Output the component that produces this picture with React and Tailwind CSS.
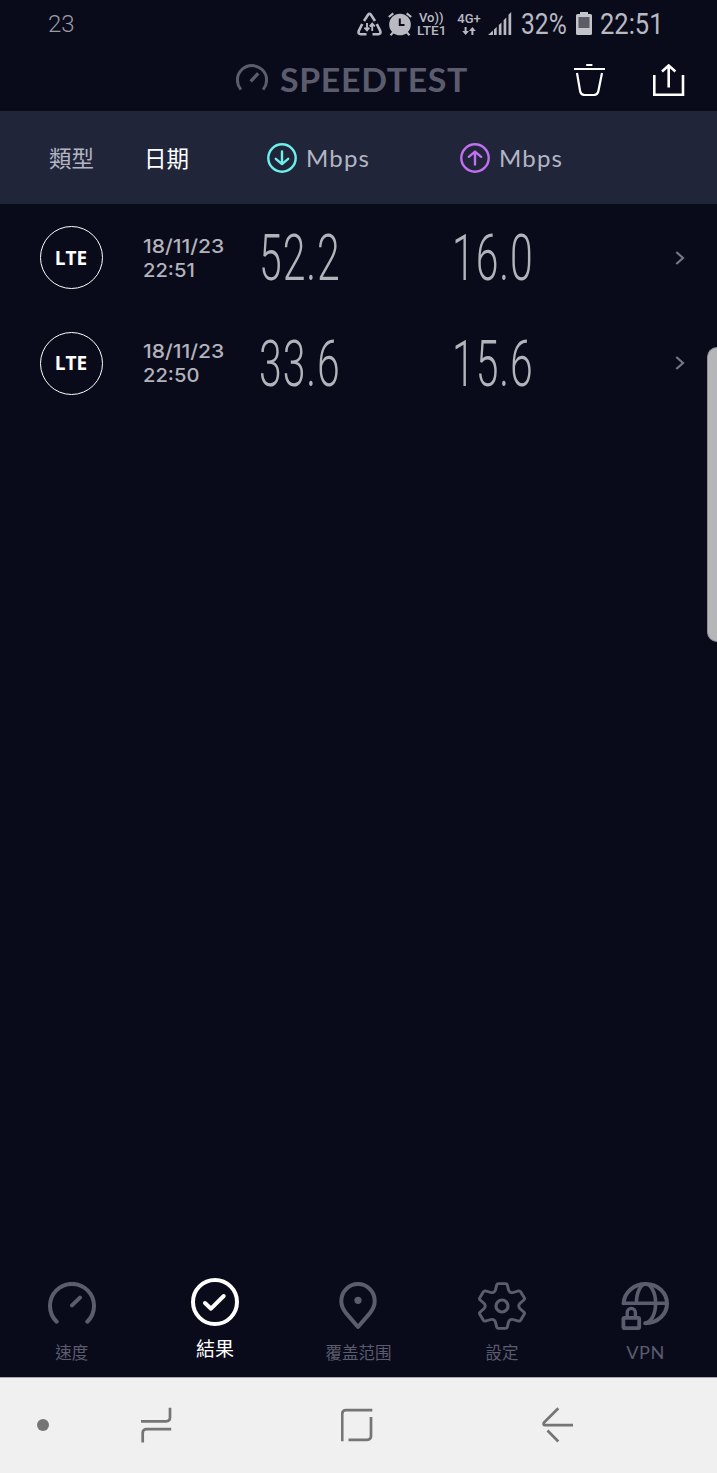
import React from 'react';
import clsx from 'clsx';

const results = [
  { id: 1, type: 'LTE', date: '18/11/23', time: '22:51', download: '52.2', upload: '16.0' },
  { id: 2, type: 'LTE', date: '18/11/23', time: '22:50', download: '33.6', upload: '15.6' },
];

const tabs = [
  { id: 'speed', label: '速度', Icon: GaugeIcon },
  { id: 'results', label: '結果', Icon: CheckIcon, active: true },
  { id: 'coverage', label: '覆盖范围', Icon: PinIcon },
  { id: 'settings', label: '設定', Icon: GearIcon },
  { id: 'vpn', label: 'VPN', Icon: VpnIcon },
];

function GaugeIcon() {
  return (
    <svg className="size-12" viewBox="0 0 48 48" fill="none" stroke="currentColor" strokeWidth="4" strokeLinecap="round">
      <path d="M8.7 39.7A22 22 0 1 1 39.3 39.7M24 23.4L32 15.6" />
    </svg>
  );
}

function CheckIcon() {
  return (
    <svg className="size-12" viewBox="0 0 48 48" fill="none" stroke="currentColor" strokeWidth="4">
      <circle cx="24" cy="24" r="22" />
      <path d="M14 25L20 30.7L32.7 18" strokeLinecap="round" strokeLinejoin="round" />
    </svg>
  );
}

function PinIcon() {
  return (
    <svg className="size-12" viewBox="0 0 48 48" fill="none" stroke="currentColor" strokeWidth="4">
      <path d="M24 2A16.7 17 0 0 0 7.3 19.3C7.3 24.6 9.6 28 12.3 31.4L24 45L35.7 31.4C38.4 28 40.7 24.6 40.7 19.3A16.7 17 0 0 0 24 2Z" strokeLinejoin="round" />
      <circle cx="24" cy="18.3" r="3.6" fill="currentColor" stroke="none" />
    </svg>
  );
}

function GearIcon() {
  return (
    <svg className="size-12" viewBox="0 0 48 48" fill="none" stroke="currentColor" strokeWidth="2.8" strokeLinejoin="round">
      <path
        transform="translate(-1.2 0) scale(1.05 1)"
        d="M20.5 1.6H27.5Q28.6 1.6 29 2.8L30.3 8.2Q30.7 9.6 32 10.3Q33.2 11 34.6 10.5L39.8 8.9Q41 8.6 41.7 9.7L45.2 15.8Q45.8 16.9 45 17.8L41 21.6Q40 22.6 40 24Q40 25.4 41 26.4L45 30.2Q45.8 31.1 45.2 32.2L41.7 38.3Q41 39.4 39.8 39.1L34.6 37.5Q33.2 37 32 37.7Q30.7 38.4 30.3 39.8L29 45.2Q28.6 46.4 27.5 46.4H20.5Q19.4 46.4 19 45.2L17.7 39.8Q17.3 38.4 16 37.7Q14.8 37 13.4 37.5L8.2 39.1Q7 39.4 6.3 38.3L2.8 32.2Q2.2 31.1 3 30.2L7 26.4Q8 25.4 8 24Q8 22.6 7 21.6L3 17.8Q2.2 16.9 2.8 15.8L6.3 9.7Q7 8.6 8.2 8.9L13.4 10.5Q14.8 11 16 10.3Q17.3 9.6 17.7 8.2L19 2.8Q19.4 1.6 20.5 1.6Z"
      />
      <circle cx="24" cy="24" r="6" strokeWidth="3.2" />
    </svg>
  );
}

function VpnIcon() {
  return (
    <svg className="size-12" viewBox="0 0 48 48" fill="none" stroke="currentColor" strokeWidth="4" strokeLinecap="round" strokeLinejoin="round">
      <path d="M2.6 21.3C3.4 10 13 2 24.6 2C36.8 2 46 10.6 46 21.6C46 32.2 37 41 24.3 41.2" />
      <path d="M2.6 21.3H46" strokeWidth="3.4" />
      <path d="M15.4 21C15.4 10 20 2 24.6 2C29.6 2 34.6 10 34.6 21C34.6 32 30.6 39.5 24.3 41.2" strokeWidth="3.6" />
      <rect x="2.4" y="35.8" width="15.8" height="10.3" rx="1" strokeWidth="3.8" />
      <path d="M6.2 35V30.7A4.1 4.3 0 0 1 14.4 30.7V35" strokeWidth="3.4" />
    </svg>
  );
}

function SpeedArrow({ up, className }) {
  return (
    <svg className={clsx('size-8', className)} viewBox="0 0 32 32" fill="none" stroke="currentColor" strokeWidth="2.4" strokeLinecap="round">
      <circle cx="16" cy="16" r="13.7" />
      <path d={up ? 'M16 22.5V10M9.8 14.8L16 9.6L22.2 14.8' : 'M16 9.5V22M9.8 16.8L16 22.2L22.2 16.8'} strokeLinejoin="round" />
    </svg>
  );
}

function StatusBar() {
  return (
    <div className="flex h-12 items-center pl-12 text-[#b9b9c1]">
      <span className="w-[309px] text-[24px] font-light text-[#9b9ba5]">23</span>
      <svg className="h-6 w-[25px] shrink-0" viewBox="0 0 25 24" fill="none" stroke="currentColor" strokeWidth="2.6">
        <path d="M7 9L11.2 2.6Q12.5 .9 13.8 2.6L18 9M5.2 12L1.8 18.8Q.8 22.2 3.8 22.2H9.5M19.8 12L23.2 18.8Q24.2 22.2 21.2 22.2H15.5" />
        <path d="M10 11V18M7.4 15.6L10 18.3L12.4 15.6M15.2 19V12M12.7 14.4L15.2 11.7L17.8 14.4" strokeWidth="1.9" />
      </svg>
      <svg className="ml-1.5 h-6 w-6 shrink-0" viewBox="0 0 24 24" fill="none" stroke="currentColor" strokeWidth="2.2">
        <circle cx="12" cy="12.5" r="10.8" fill="currentColor" stroke="none" />
        <path d="M.8 5L5.3 1.3M23.2 5L18.7 1.3M5.5 20L2.5 23.2M18.5 20L21.5 23.2" />
        <path d="M11.8 6.5V13H16.5" stroke="#0a0b1a" strokeWidth="2" />
      </svg>
      <div className="ml-[5px] flex w-8 shrink-0 flex-col pb-px text-[13px] leading-[13px] font-medium">
        <span className="pl-0.5 whitespace-nowrap">Vo))</span>
        <span className="origin-left scale-x-105">LTE1</span>
      </div>
      <div className="ml-[7px] flex w-[26px] shrink-0 flex-col items-center gap-0.5 pb-px text-[13px] leading-[13px] font-medium">
        <span>4G+</span>
        <svg className="h-2 w-3.5" viewBox="0 0 14 8" fill="currentColor">
          <path d="M2.6 0H4.6V4H7L3.6 8L.2 4H2.6ZM9.4 8H11.4V4H13.8L10.4 0L7 4H9.4Z" />
        </svg>
      </div>
      <svg className="ml-1.5 h-6 w-6 shrink-0" viewBox="0 0 24 24" fill="currentColor">
        <path d="M0 23L5 18.5V23ZM6 17.5L8.7 15V23H6ZM10.8 13L13.5 10.4V23H10.8ZM15.6 8.2L18.3 5.5V23H15.6ZM20.5 2.7L23.2 0V23H20.5Z" />
      </svg>
      <span className="ml-[9px] w-[55px] shrink-0 origin-left scale-x-[.85] pt-0.5 text-[29px] whitespace-nowrap">32%</span>
      <svg className="h-6 w-4 shrink-0" viewBox="0 0 16 24">
        <path d="M4 0H12V2H14.5Q16 2 16 3.5V21.5Q16 23 14.5 23H1.5Q0 23 0 21.5V3.5Q0 2 1.5 2H4Z" fill="#c3c3ca" />
        <path d="M2.5 5H13.5V16H2.5Z" fill="#5b5b66" />
      </svg>
      <span className="ml-2 shrink-0 origin-left scale-x-[.88] pt-0.5 text-[29px] whitespace-nowrap">22:51</span>
    </div>
  );
}

function Header() {
  return (
    <header className="flex h-[63px] items-center pr-8 pl-[236px]">
      <svg className="size-8 text-[#5b5c6e]" viewBox="0 0 32 32" fill="none" stroke="currentColor" strokeWidth="3">
        <path d="M4.9 25.6A14.6 14.6 0 1 1 27.1 25.6" />
        <path d="M14.7 17.3L22.2 9.4" strokeWidth="3.4" />
      </svg>
      <h1 className="ml-3 origin-left scale-x-[1.06] font-['Lato'] text-[32px] font-bold tracking-[.6px] text-[#5b5c6e]">
        SPEEDTEST
      </h1>
      <div className="ml-auto flex items-center text-white">
        <svg className="h-8 w-8" viewBox="0 0 32 32" fill="none" stroke="currentColor" strokeWidth="2.2">
          <path d="M0 5H31M12.2 1H18.4" />
          <path d="M3 9L6 26.5Q6.7 31 10.7 31H19.7Q23.7 31 24.5 26.5L28 9" />
        </svg>
        <svg className="ml-[47px] h-8 w-8" viewBox="0 0 32 32" fill="none" stroke="currentColor" strokeWidth="2.6">
          <path d="M1.3 11V30.7H30V11M15.7 23.5V2M9 7.5L15.7 1.5L22.4 7.5" />
        </svg>
      </div>
    </header>
  );
}

function Speed({ value }) {
  return (
    <span className="inline-block origin-left translate-y-px scale-x-[.63] text-[65px] leading-none font-light tracking-[1.5px] text-[#b3b3bb]">
      {value}
    </span>
  );
}

function ResultRow({ result }) {
  return (
    <li className="flex h-[105.5px] items-center pr-8 pl-10">
      <div className="flex size-[63px] shrink-0 items-center justify-center rounded-full border-[1.5px] border-white font-['Open_Sans'] text-xl font-bold text-white">
        <span className="scale-x-95">{result.type}</span>
      </div>
      <div className="ml-10 w-[116px] shrink-0 pt-0.5 font-['Inter'] text-[19px] leading-6 font-medium text-[#b3b3bb]">
        <div className="origin-left scale-x-[1.11]">{result.date}</div>
        <div className="origin-left scale-x-[1.06]">{result.time}</div>
      </div>
      <div className="w-[193px] shrink-0">
        <Speed value={result.download} />
      </div>
      <Speed value={result.upload} />
      <svg className="ml-auto h-3.5 w-2.5 shrink-0" viewBox="0 0 10 14" fill="none" stroke="#74758a" strokeWidth="2.2">
        <path d="M1.3 1L8 7L1.3 13" />
      </svg>
    </li>
  );
}

export default function App() {
  return (
    <div className="relative flex h-[1473px] w-[717px] flex-col overflow-hidden bg-[#0a0b1a] font-['Roboto','Noto_Sans_CJK_TC',sans-serif]">
      <StatusBar />
      <Header />

      <div className="flex h-[93px] items-center bg-[#21253a] pl-[49px] text-[22.5px] text-[#b3b5c2]">
        <span className="w-[95px] font-['Noto_Sans_CJK_TC',sans-serif]">類型</span>
        <span className="w-[122px] font-['Noto_Sans_CJK_TC',sans-serif] text-white">日期</span>
        <div className="flex w-[193px] items-center gap-2">
          <SpeedArrow className="text-[#6df0ea]" />
          <span className="font-['Lato'] text-2xl tracking-[1.2px]">Mbps</span>
        </div>
        <div className="flex items-center gap-2">
          <SpeedArrow up className="text-[#c070f0]" />
          <span className="font-['Lato'] text-2xl tracking-[1.2px]">Mbps</span>
        </div>
      </div>

      <ul className="flex-1 pt-px">
        {results.map((result) => (
          <ResultRow key={result.id} result={result} />
        ))}
      </ul>

      <nav className="grid h-[105px] grid-cols-5 font-['Lato','Noto_Sans_CJK_TC',sans-serif]">
        {tabs.map(({ id, label, Icon, active }) => (
          <div
            key={id}
            className={clsx(
              'flex flex-col items-center',
              active ? 'pt-1.5 text-[19px] text-white' : 'pt-2.5 text-[16.5px] text-[#5b5c6e]'
            )}
          >
            <Icon />
            <span className={clsx('mt-[9px] leading-7', id === 'vpn' && 'scale-x-110 tracking-[.5px]')}>{label}</span>
          </div>
        ))}
      </nav>

      {/* Android navigation keys */}
      <div className="flex h-24 shrink-0 items-center border-t border-[#a9a8b0] bg-[#f0f0f0] pb-0.5 pl-[37px] text-[#757575]">
        <div className="size-3 rounded-full bg-[#757575]" />
        <svg className="ml-[92px] h-9 w-8" viewBox="0 0 32 36" fill="none" stroke="currentColor" strokeWidth="2.7">
          <path d="M0 14.3H25Q29 14.3 29 10.5V.8M30.2 22.2H5.5Q1.7 22.2 1.7 26V35.5" />
        </svg>
        <svg className="ml-[168px] h-9 w-8" viewBox="0 0 32 36" fill="none" stroke="currentColor" strokeWidth="2.7">
          <path d="M31.3 3.2H5Q1.2 3.2 1.2 7V34.2M7.5 32.8H26Q30 32.8 30 29V10" />
        </svg>
        <svg className="ml-[169px] h-9 w-8" viewBox="0 0 32 36" fill="none" stroke="currentColor" strokeWidth="2.7">
          <path d="M16.3 1.3L2 15.6Q.8 18.2 3 18.2H31M5.5 23.5L16.3 34.5" />
        </svg>
      </div>

      {/* edge panel handle */}
      <div className="absolute top-[347px] right-0 h-[295px] w-2.5 rounded-l-[10px] border border-r-0 border-[#8e8e96] bg-[#b5b6b8]" />
    </div>
  );
}
